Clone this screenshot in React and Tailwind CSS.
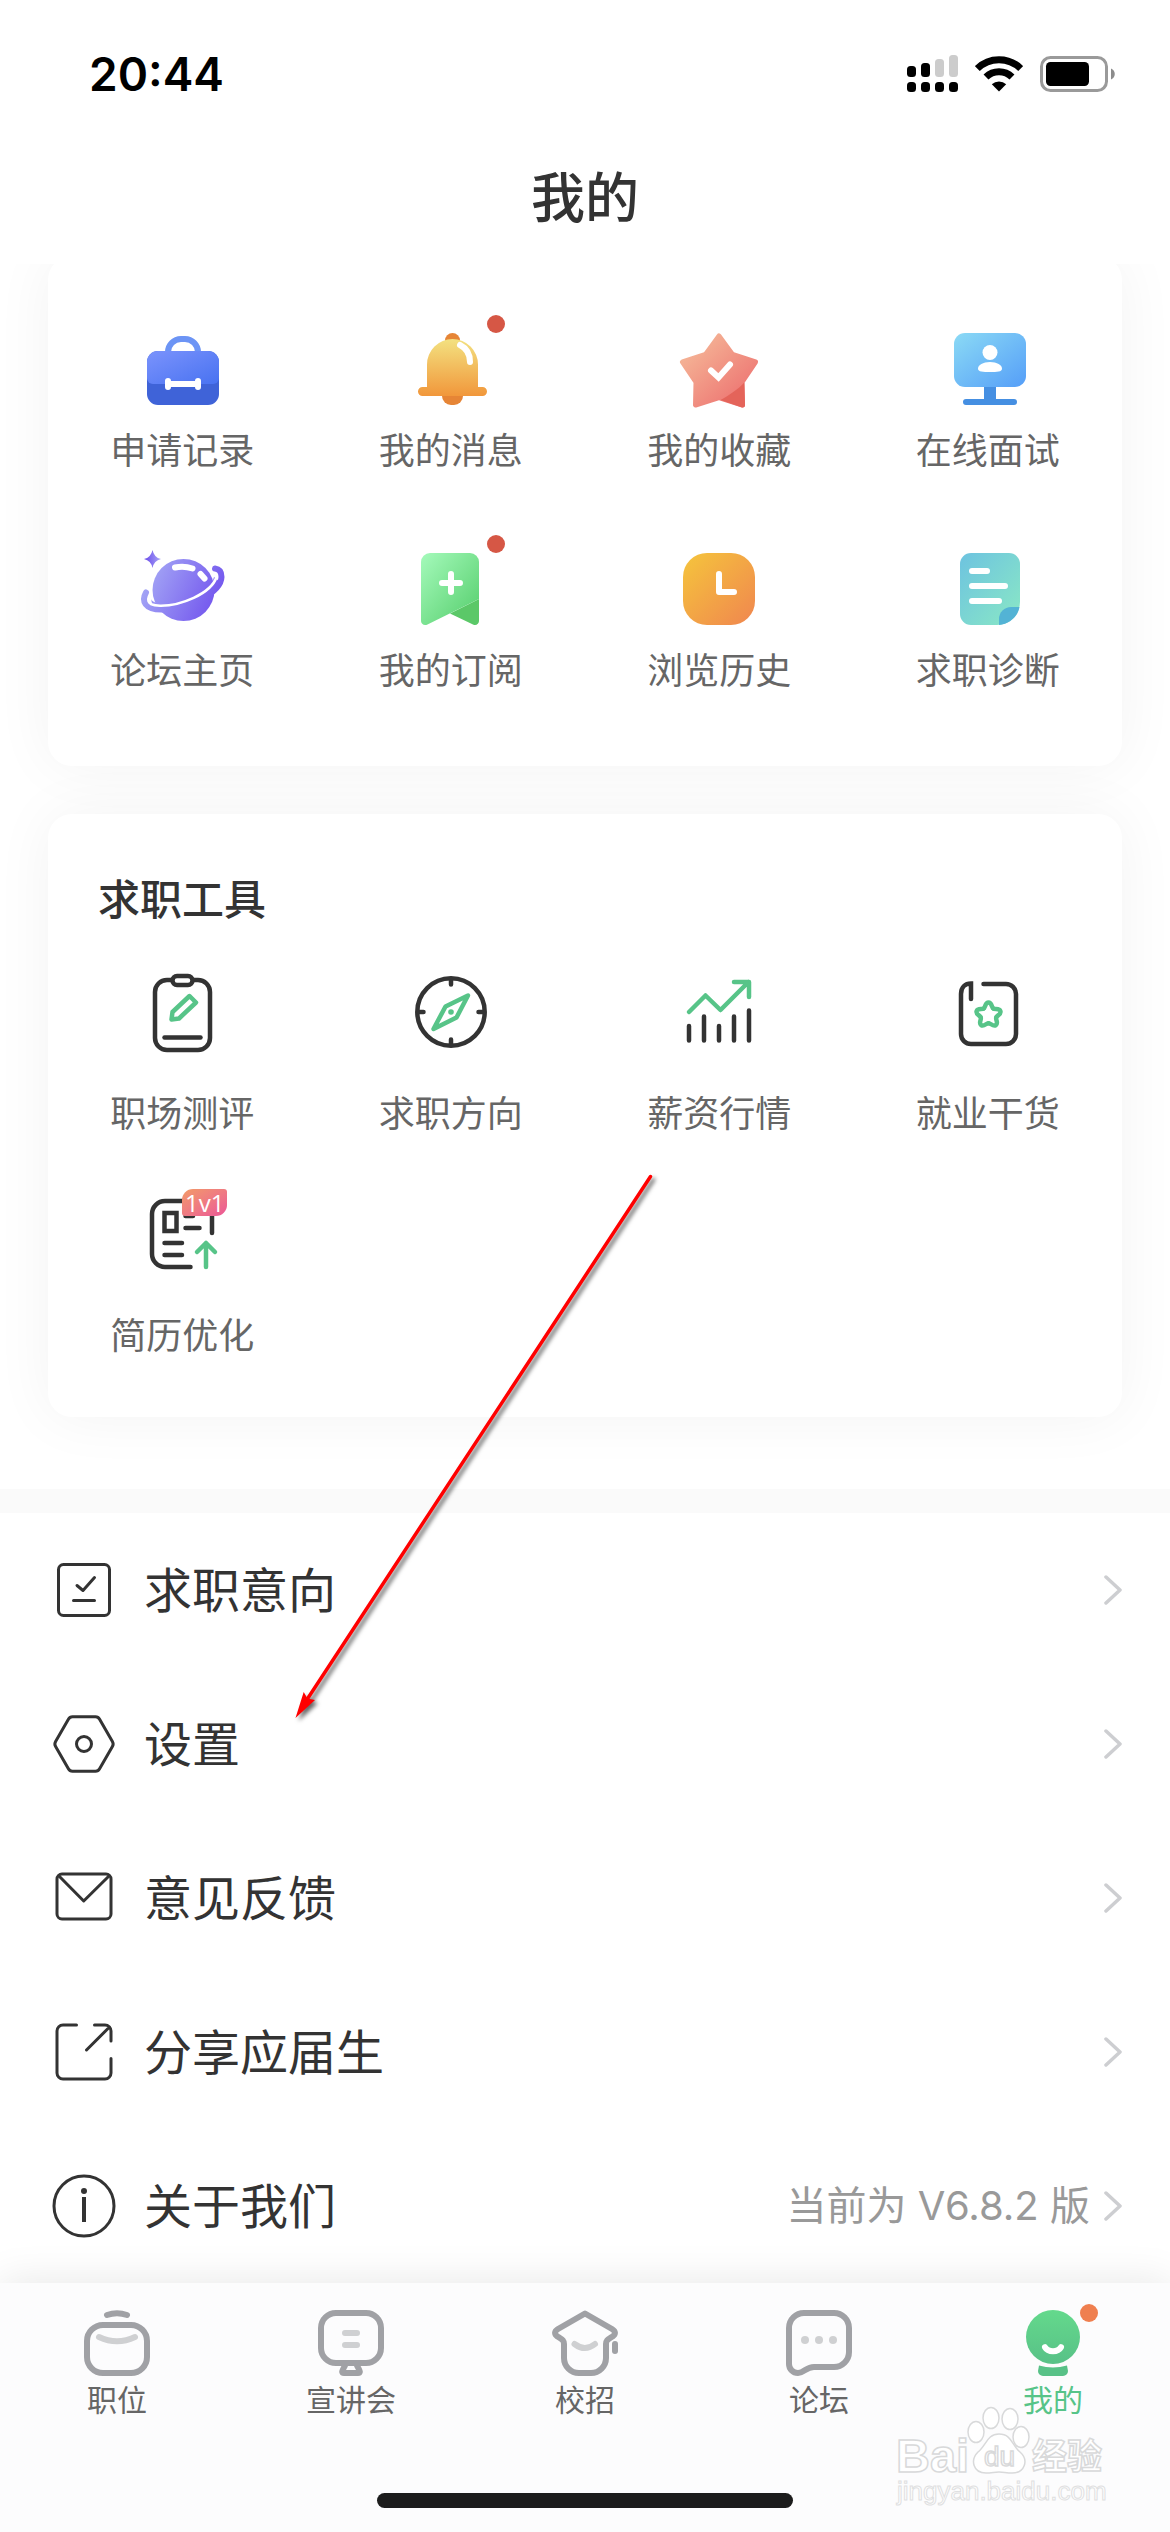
import React from "react";

const INK = "#333333";
const GREEN = "#57c488";

function StatusIcons() {
  const upper = [
    { x: 0, y: 11, h: 11, c: "#000" },
    { x: 14, y: 8, h: 14, c: "#000" },
    { x: 28, y: 4, h: 18, c: "#cccccc" },
    { x: 42, y: 0, h: 22, c: "#cccccc" },
  ];
  return (
    <div className="flex items-center gap-[17px]">
      <svg width="51" height="38" viewBox="0 0 51 38" aria-label="信号">
        {upper.map((b) => (
          <g key={b.x}>
            <rect x={b.x} y={b.y} width="9" height={b.h} rx="3.5" fill={b.c} />
            <rect x={b.x} y="27" width="9" height="10" rx="3.5" fill="#000" />
          </g>
        ))}
      </svg>
      <svg width="48" height="38" viewBox="0 0 48 38" aria-label="Wi-Fi">
        <g fill="none" stroke="#000" strokeWidth="7">
          <path d="M2.3 13.6A31 31 0 0 1 45.700 13.6" />
          <path d="M11 22A18.500 18.500 0 0 1 37 22" />
        </g>
        <path d="M24 36.500L16.800 29.300A10.500 10.500 0 0 1 31.200 29.300Z" fill="#000" />
      </svg>
      <svg width="76" height="38" viewBox="0 0 76 38" aria-label="电量">
        <rect x="1.5" y="2.500" width="65" height="33" rx="9" fill="none" stroke="#9a9a9a" strokeWidth="3" />
        <rect x="6" y="7" width="43" height="24" rx="4.500" fill="#000" />
        <path d="M71 13.500C76 15.500 76 22.500 71 24.500Z" fill="#8c8c8c" />
      </svg>
    </div>
  );
}

function Icon({ children }) {
  return (
    <svg width="90" height="90" viewBox="0 0 90 90" fill="none" aria-hidden="true" className="block">
      {children}
    </svg>
  );
}

function Gradient({ id, from, to, vertical }) {
  return (
    <defs>
      <linearGradient id={id} x1="0" y1="0" x2={vertical ? "0" : "1"} y2="1">
        <stop offset="0" stopColor={from} />
        <stop offset="1" stopColor={to} />
      </linearGradient>
    </defs>
  );
}

const BagIcon = () => (
  <Icon>
    <Gradient id="bag" from="#7b93fc" to="#4872f1" />
    <path d="M31 30V28A13 13 0 0 1 44 15H48A13 13 0 0 1 61 28V30" stroke="#6c94f5" strokeWidth="6" />
    <rect x="10" y="27" width="72" height="54" rx="11" fill="#3f63d8" />
    <path d="M21 27H71A11 11 0 0 1 82 38V54A6 6 0 0 1 76 60H16A6 6 0 0 1 10 54V38A11 11 0 0 1 21 27Z" fill="url(#bag)" />
    <path d="M31 57V63M61 57V63M31 60H61" stroke="#fff" strokeWidth="6" strokeLinecap="round" />
  </Icon>
);

const BellIcon = () => (
  <Icon>
    <Gradient id="bell" from="#f3e180" to="#f1973b" vertical />
    <circle cx="46.500" cy="16.500" r="7.500" fill="#e68536" />
    <path d="M36 72H57A9 9 0 0 1 48 81H45A9 9 0 0 1 36 72Z" fill="#e68536" />
    <path d="M21 63V40.500A25.500 25.500 0 0 1 72 40.500V63H76.500A4.500 4.500 0 0 1 76.500 72H16.500A4.500 4.500 0 0 1 16.500 63Z" fill="url(#bell)" />
    <path d="M54 21C60 24 64 30 64 38" stroke="#fff" strokeWidth="6" strokeLinecap="round" />
  </Icon>
);

const StarIcon = () => (
  <Icon>
    <Gradient id="star" from="#f6bf9c" to="#ec6a6c" />
    <path
      d="M45 12L58.500 30.500L81.500 38L68 58L68.500 81L45 73.500L21.500 81L22 58L8.500 38L31.500 30.500Z"
      fill="url(#star)"
      stroke="url(#star)"
      strokeWidth="5"
      strokeLinejoin="round"
    />
    <path d="M70.300 58.500L71 81C71 83 69.500 84 67.500 83.300L46.500 76C55 71.500 65 64.500 70.300 58.500Z" fill="#e4645a" />
    <path d="M37 46.500L44.500 53.500L56 40.500" stroke="#fff" strokeWidth="6" strokeLinecap="round" />
  </Icon>
);

const MonitorIcon = () => (
  <Icon>
    <Gradient id="monitor" from="#8bdaf5" to="#559ef8" />
    <path d="M41 60H53V75H71A3 3 0 0 1 71 81H23A3 3 0 0 1 23 75H41Z" fill="#458fe2" />
    <rect x="11" y="9" width="72" height="54" rx="11" fill="url(#monitor)" />
    <circle cx="47" cy="28.500" r="7.500" fill="#fff" />
    <path d="M35 44.500C35 41 40 38 47 38S59 41 59 44.500S54 48 47 48S35 48 35 44.500Z" fill="#fff" />
  </Icon>
);

const PlanetIcon = () => (
  <Icon>
    <defs>
      <linearGradient id="planet" gradientUnits="userSpaceOnUse" x1="14" y1="30" x2="78" y2="60">
        <stop offset="0" stopColor="#a2a3f5" />
        <stop offset="1" stopColor="#7458ee" />
      </linearGradient>
      <linearGradient id="spark" x1="0" x2="1" y1="0" y2="0">
        <stop offset="0" stopColor="#6848ea" />
        <stop offset="1" stopColor="#a9a5f7" />
      </linearGradient>
    </defs>
    <path d="M15.500 6Q17 13.500 24 15Q17 16.500 15.500 24Q14 16.500 7 15Q14 13.500 15.500 6Z" fill="url(#spark)" />
    <circle cx="46.500" cy="46" r="31" fill="url(#planet)" />
    <path d="M14 55C18 66 72 58 77 33L83 38C80 56 30 70 16 64Z" fill="url(#planet)" />
    <path d="M9 48.500C4.500 56.500 7 66 26 65.500C52 64 84 49 84.500 33C84.500 28 82 25 78 24.500" stroke="url(#planet)" strokeWidth="6" strokeLinecap="round" />
    <path d="M11.500 56.500C11.500 59.500 15 61.500 23 61.700C43 62 74 50 79.500 33" stroke="#fff" strokeWidth="2.600" />
    <path d="M38 23.500Q47 21.500 55.500 24.500M63.500 30L67.500 34.500" stroke="#fff" strokeWidth="6" strokeLinecap="round" />
  </Icon>
);

const BookmarkIcon = () => (
  <Icon>
    <Gradient id="bookmark" from="#a5fabb" to="#54cd6b" />
    <path d="M44 69.500L73 55V77C73 80 70 82 67 80.500Z" fill="#5bc868" />
    <path d="M24 9H64A9 9 0 0 1 73 18V55L21.500 80.500C18 82 15 80 15 77V18A9 9 0 0 1 24 9Z" fill="url(#bookmark)" />
    <path d="M45 30V48M36 39H54" stroke="#fff" strokeWidth="6" strokeLinecap="round" />
  </Icon>
);

const ClockIcon = () => (
  <Icon>
    <Gradient id="clock" from="#f5c53c" to="#f0864f" />
    <rect x="9" y="9" width="72" height="72" rx="24" fill="url(#clock)" />
    <path d="M45 30V48H60" stroke="#fff" strokeWidth="6" strokeLinecap="round" strokeLinejoin="round" />
  </Icon>
);

const DiagnoseIcon = () => (
  <Icon>
    <Gradient id="doc" from="#6dc3e0" to="#8ae8c5" />
    <path d="M28 9H66A11 11 0 0 1 77 20V58A23 23 0 0 1 54 81H28A11 11 0 0 1 17 70V20A11 11 0 0 1 28 9Z" fill="url(#doc)" />
    <path d="M56 81V75A12 12 0 0 1 68 63H76.500C75 72.500 66 80 56 81Z" fill="#53b3d5" />
    <path d="M29 27H44M29 42H62M29 57H56" stroke="#fff" strokeWidth="6" strokeLinecap="round" />
  </Icon>
);

const ClipboardIcon = () => (
  <Icon>
    <g stroke={INK} strokeWidth="4.500" strokeLinecap="round">
      <rect x="18" y="13" width="55" height="70" rx="12" />
      <rect x="35.500" y="9" width="20" height="9" rx="4.500" fill="#fff" />
      <path d="M27.500 70.500H63.500" />
    </g>
    <path d="M52.500 29L59 35.500L42 51.500L34.500 52.500L35.500 45Z" stroke={GREEN} strokeWidth="4.500" strokeLinejoin="round" />
  </Icon>
);

const CompassIcon = () => (
  <Icon>
    <g stroke={INK} strokeWidth="4.500" strokeLinecap="round">
      <circle cx="45" cy="45" r="33.700" />
      <path d="M45 12V17.500M45 72.500V78M12 45H17.500M72.500 45H78" />
    </g>
    <path d="M62 28.500L50.500 50.500L27.500 62L39.500 39.500Z" stroke={GREEN} strokeWidth="4.500" strokeLinejoin="round" />
    <circle cx="45" cy="45" r="2.800" fill={GREEN} />
  </Icon>
);

const ChartIcon = () => (
  <Icon>
    <path d="M15 59V73.500M30 49.500V73.500M45 59V73.500M60 49.500V73.500M75 43.500V73.500" stroke={INK} strokeWidth="4.500" strokeLinecap="round" />
    <path d="M15 45L31.500 28.500L46.500 43L74.500 15M60 15H75V30" stroke={GREEN} strokeWidth="4.500" strokeLinecap="round" strokeLinejoin="round" />
  </Icon>
);

const BookIcon = () => (
  <Icon>
    <path
      d="M40.500 17H63A10 10 0 0 1 73 27V67A10 10 0 0 1 63 77H28A10 10 0 0 1 18 67V27C18 20.500 22 16.500 28 16.500V32"
      stroke={INK}
      strokeWidth="4.500"
      strokeLinecap="round"
    />
    <g stroke={GREEN} strokeWidth="4.500" strokeLinecap="round">
      {[0, 72, 144, 216, 288].map((a) => (
        <path key={a} d="M-4.800 -6.600C-3 -7.500 -3.500 -12.500 0 -12.500C3.500 -12.500 3 -7.500 4.800 -6.600" transform={`translate(45.5 48) rotate(${a})`} />
      ))}
    </g>
  </Icon>
);

const ResumeIcon = () => (
  <Icon>
    <g stroke={INK} strokeWidth="4.500" strokeLinecap="round">
      <path d="M48 12H28A13 13 0 0 0 15 25V65A13 13 0 0 0 28 78H53.500M75 24V44" />
      <rect x="27.500" y="24" width="12" height="18" />
      <path d="M48.500 27H56M48.500 39H62.500M27.500 54H45M27.500 66H45" />
    </g>
    <path d="M60 63L69 54L78 63M69 54V78" stroke={GREEN} strokeWidth="4.500" strokeLinecap="round" strokeLinejoin="round" />
  </Icon>
);

const shortcuts = [
  { label: "申请记录", icon: BagIcon },
  { label: "我的消息", icon: BellIcon, dot: true },
  { label: "我的收藏", icon: StarIcon },
  { label: "在线面试", icon: MonitorIcon },
  { label: "论坛主页", icon: PlanetIcon },
  { label: "我的订阅", icon: BookmarkIcon, dot: true },
  { label: "浏览历史", icon: ClockIcon },
  { label: "求职诊断", icon: DiagnoseIcon },
];

const tools = [
  { label: "职场测评", icon: ClipboardIcon },
  { label: "求职方向", icon: CompassIcon },
  { label: "薪资行情", icon: ChartIcon },
  { label: "就业干货", icon: BookIcon },
  { label: "简历优化", icon: ResumeIcon, badge: "1v1" },
];

function Tile({ item, gap }) {
  const Glyph = item.icon;
  return (
    <a href="#" className={`flex flex-col items-center ${gap}`}>
      <span className="relative">
        <Glyph />
        {item.dot && <span className="absolute -top-[9px] -right-[9px] size-[18px] rounded-full bg-[#d65745]" />}
        {item.badge && (
          <span className="absolute top-0 right-0 flex h-[27px] w-[45px] items-center justify-center rounded-tl-[11px] rounded-tr-[3px] rounded-br-[11px] rounded-bl-[3px] bg-linear-to-br from-[#f29a66] to-[#eb5596] font-['Open_Sans',sans-serif] text-[24px] leading-none text-white">
            {item.badge}
          </span>
        )}
      </span>
      <span className="text-[36px] leading-[48px] text-[#666666]">{item.label}</span>
    </a>
  );
}

const line = { fill: "none", stroke: INK, strokeWidth: 3, strokeLinecap: "round", strokeLinejoin: "round" };

const rows = [
  {
    label: "求职意向",
    art: (
      <g {...line}>
        <rect x="10.500" y="10.500" width="51" height="51" rx="5" />
        <path d="M29 31.500L35 36.500L46.500 23.500M25.500 46.500H46.500" />
      </g>
    ),
  },
  {
    label: "设置",
    art: (
      <g {...line}>
        <path d="M24.500 8.800H47.500C49.500 8.800 50.600 9.500 51.600 11.300L64.400 33.400C65.500 35.300 65.500 36.700 64.400 38.600L51.600 60.700C50.600 62.500 49.500 63.200 47.500 63.200H24.500C22.500 63.200 21.400 62.500 20.400 60.700L7.600 38.600C6.500 36.700 6.500 35.300 7.600 33.400L20.400 11.300C21.400 9.500 22.500 8.800 24.500 8.800Z" />
        <circle cx="36" cy="36" r="7.500" />
      </g>
    ),
  },
  {
    label: "意见反馈",
    art: (
      <g {...line}>
        <rect x="9" y="12" width="54" height="45" rx="5" />
        <path d="M11 14L35.700 39L61 14" />
      </g>
    ),
  },
  {
    label: "分享应届生",
    art: (
      <g {...line}>
        <path d="M28.500 9H15A6 6 0 0 0 9 15V57A6 6 0 0 0 15 63H57A6 6 0 0 0 63 57V42.500M46.500 9H57A6 6 0 0 1 63 15V25M38.500 34L61.500 11" />
      </g>
    ),
  },
  {
    label: "关于我们",
    note: "当前为 V6.8.2 版",
    art: (
      <g>
        <circle {...line} cx="36" cy="36" r="30" />
        <circle cx="36" cy="21" r="3" fill={INK} />
        <path d="M36 27V52" stroke={INK} strokeWidth="4" />
      </g>
    ),
  },
];

const GREY = "#a0a1a5";
const PALE = "#cfd0d2";

const tabs = [
  {
    label: "职位",
    art: (
      <g>
        <rect x="3" y="15" width="60" height="48" rx="16" stroke={GREY} />
        <path d="M23 5Q33 1.500 43 5" stroke={GREY} />
        <path d="M15 27Q33 35.500 51 27" stroke={PALE} />
      </g>
    ),
  },
  {
    label: "宣讲会",
    art: (
      <g>
        <path d="M27.500 54C26.500 58 21.500 63 26 63H40C44.500 63 39.500 58 38.500 54" stroke={GREY} />
        <rect x="3" y="3" width="60" height="50" rx="15" stroke={GREY} />
        <path d="M27 23H39M27 35H39" stroke={PALE} />
      </g>
    ),
  },
  {
    label: "校招",
    art: (
      <g>
        <path
          d="M33 3.500L60 19C63.800 21.500 63.800 24 60.500 26.500C56 29.500 54 30 54 34V48A15 15 0 0 1 39 63H27A15 15 0 0 1 12 48V34C12 30 10 29.500 5.500 26.500C2.200 24 2.200 21.500 6 19Z"
          stroke={GREY}
        />
        <path d="M63 34V41" stroke={GREY} />
        <path d="M22.500 34Q33 42 43 34" stroke={PALE} />
      </g>
    ),
  },
  {
    label: "论坛",
    art: (
      <g>
        <path d="M18 3H48A15 15 0 0 1 63 18V42A15 15 0 0 1 48 57H28C20 57 18 63 12 63C7 63 3 59 3 54V18A15 15 0 0 1 18 3Z" stroke={GREY} />
        {[19, 33, 47].map((x) => (
          <circle key={x} cx={x} cy="30" r="4" fill={PALE} />
        ))}
      </g>
    ),
  },
  {
    label: "我的",
    active: true,
    art: (
      <g>
        <Gradient id="me" from="#64d98c" to="#58c187" vertical />
        <circle cx="33" cy="27" r="27" fill="url(#me)" />
        <path d="M19 55.500Q33 59.500 47 55.500L48 61A5 5 0 0 1 43 66H23A5 5 0 0 1 18 61Z" fill="#58c187" />
        <path d="M25 37.200C28 42.500 38 42.500 41 37.200" stroke="#fff" />
      </g>
    ),
  },
];

function Watermark() {
  return (
    <svg className="pointer-events-none absolute right-[60px] bottom-[22px]" width="220" height="110" viewBox="0 0 220 110" fill="#fff" stroke="#d8d9da" strokeWidth="1.500">
      <text x="6" y="72" fontFamily="Liberation Sans, sans-serif" fontWeight="700" fontSize="47">Bai</text>
      <ellipse cx="86" cy="32" rx="8" ry="10.500" />
      <ellipse cx="101" cy="18" rx="8" ry="10.500" />
      <ellipse cx="120" cy="19" rx="8" ry="10.500" />
      <ellipse cx="131" cy="37" rx="8" ry="10.500" />
      <path d="M109 34C122 34 122 46 130 52C139 60 135 73 122 73C117 73 113 72 109 72S101 73 96 73C83 73 80 60 88 52C96 46 97 34 109 34Z" />
      <text x="94" y="66" fontFamily="Liberation Sans, sans-serif" fontSize="28">du</text>
      <text x="142" y="69" fontFamily="Noto Sans CJK SC, sans-serif" fontWeight="700" fontSize="35">经验</text>
      <text x="7" y="100" fontFamily="Liberation Sans, sans-serif" fontSize="26" stroke="#dfe0e1" strokeWidth="1">jingyan.baidu.com</text>
    </svg>
  );
}

function PointerArrow() {
  return (
    <svg className="pointer-events-none absolute top-[1166px] left-[285px] z-20 drop-shadow-[3px_3px_2px_rgba(0,0,0,0.6)]" width="380" height="560" viewBox="0 0 380 560" aria-hidden="true">
      <path d="M365.500 10.500L23 532" stroke="#ff0000" strokeWidth="3.500" strokeLinecap="round" />
      <path d="M10.500 552L18.700 526L22.500 532.500L30 534Z" fill="#ff0000" />
    </svg>
  );
}

export default function App() {
  return (
    <div className="relative flex min-h-screen flex-col bg-white font-['Noto_Sans_CJK_SC',sans-serif] text-[#333333]">
      <header className="relative z-10 bg-white pb-[22px]">
        <div className="flex h-[148px] items-center justify-between pr-[54px] pl-[89px]">
          <span className="font-['Inter',sans-serif] text-[46px] leading-none font-semibold text-black">20:44</span>
          <StatusIcons />
        </div>
        <h1 className="text-center text-[54px] leading-[94px] font-medium">我的</h1>
      </header>

      <main className="flex flex-col">
        <div className="flex flex-col gap-12 px-12 pb-[72px]">
          <section className="-mt-2 grid grid-cols-4 gap-y-[72px] rounded-3xl bg-white pt-[68px] pb-[74px] shadow-[0_0_60px_rgba(0,0,0,0.05)]">
            {shortcuts.map((item) => (
              <Tile key={item.label} item={item} gap="gap-[10px]" />
            ))}
          </section>
          <section className="rounded-3xl bg-white pt-[55px] pb-[60px] shadow-[0_0_60px_rgba(0,0,0,0.05)]">
            <h2 className="px-[50px] text-[42px] leading-[56px] font-medium">求职工具</h2>
            <div className="mt-[42px] grid grid-cols-4 gap-y-[54px]">
              {tools.map((item) => (
                <Tile key={item.label} item={item} gap="gap-[30px]" />
              ))}
            </div>
          </section>
        </div>

        <ul className="relative border-t-[24px] border-[#fafafa] bg-white">
          {rows.map((row) => (
            <li key={row.label}>
              <a href="#" className="flex h-[154px] items-center px-12">
                <svg width="72" height="72" viewBox="0 0 72 72" aria-hidden="true">
                  {row.art}
                </svg>
                <span className="ml-6 flex-1 pb-1.5 text-[48px] leading-[72px]">{row.label}</span>
                {row.note && (
                  <span className="mr-3 font-['Inter','Noto_Sans_CJK_SC',sans-serif] text-[40px] leading-[60px] text-[#999999]">
                    {row.note}
                  </span>
                )}
                <svg width="20" height="34" viewBox="0 0 20 34" aria-hidden="true">
                  <path d="M4 4L18 17L4 30" fill="none" stroke="#cdced1" strokeWidth="3.500" strokeLinecap="round" strokeLinejoin="round" />
                </svg>
              </a>
            </li>
          ))}
        </ul>
      </main>

      <nav className="relative z-10 flex flex-1 flex-col bg-[#fcfcfd] pt-[27px] pb-6 shadow-[0_0_40px_rgba(0,0,0,0.1)]">
        <div className="grid grid-cols-5">
          {tabs.map((tab) => (
            <a key={tab.label} href="#" className="flex flex-col items-center gap-1">
              <span className="relative">
                <svg className="block" width="66" height="66" viewBox="0 0 66 66" fill="none" strokeWidth="6" strokeLinecap="round" strokeLinejoin="round" aria-hidden="true">
                  {tab.art}
                </svg>
                {tab.active && <span className="absolute -top-1.5 -right-3 size-[18px] rounded-full bg-[#ef7f4f]" />}
              </span>
              <span className={tab.active ? "text-[30px] leading-9 text-[#57c488]" : "text-[30px] leading-9 text-[#666666]"}>{tab.label}</span>
            </a>
          ))}
        </div>
        <div className="mx-auto mt-auto h-[15px] w-[416px] rounded-full bg-[#1c1c1c]" />
        <Watermark />
      </nav>

      <PointerArrow />
    </div>
  );
}
